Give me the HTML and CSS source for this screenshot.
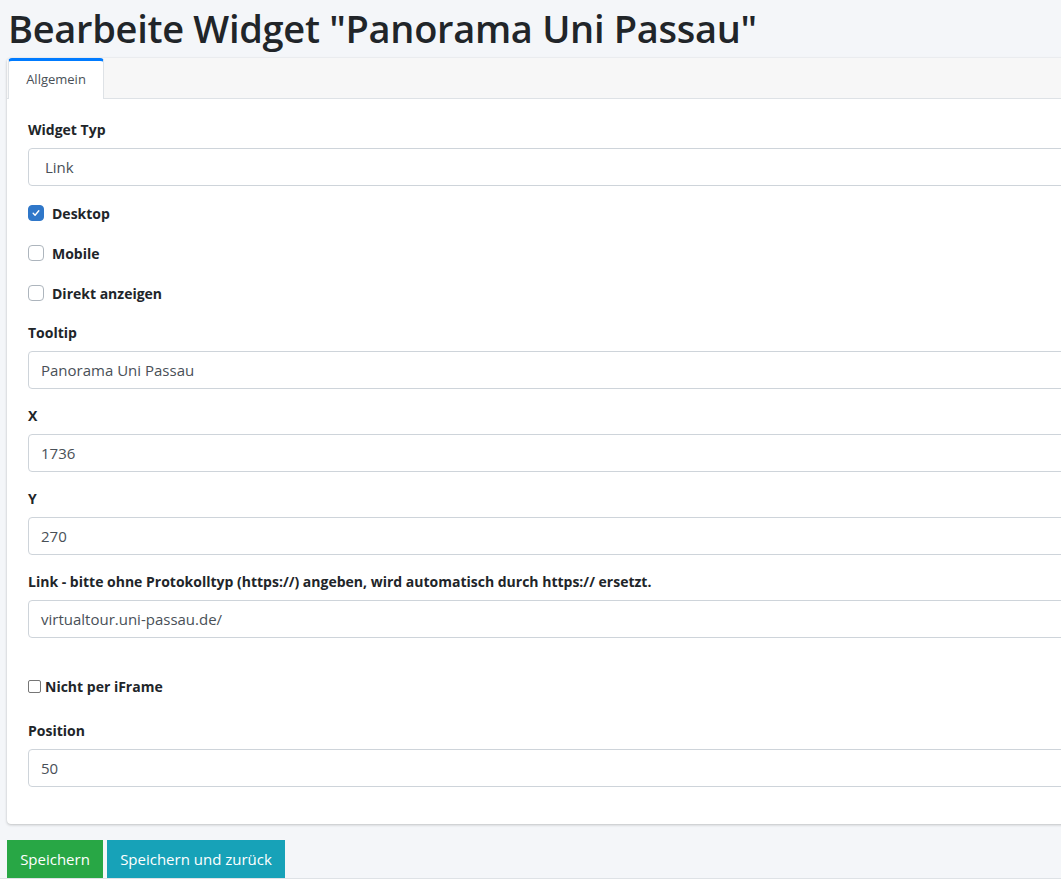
FILE: index.html
```html
<!DOCTYPE html>
<html lang="de">
<head>
<meta charset="utf-8">
<title>Bearbeite Widget</title>
<link rel="stylesheet" href="styles.css">
</head>
<body>
<div class="page">
  <h1 class="title">Bearbeite Widget "Panorama Uni Passau"</h1>
  <div class="card">
    <div class="card-header">
      <div class="tab active">Allgemein</div>
    </div>
    <div class="card-body">
      <div class="group">
        <label class="label">Widget Typ</label>
        <div class="control select">Link</div>
      </div>
      <div class="check"><span class="box checked"><svg viewBox="0 0 16 16" width="10" height="10"><path d="M3.5 8.5l3 3 6-7" fill="none" stroke="#fff" stroke-width="2.2" stroke-linecap="round" stroke-linejoin="round"/></svg></span><span class="check-label">Desktop</span></div>
      <div class="check"><span class="box"></span><span class="check-label">Mobile</span></div>
      <div class="check"><span class="box"></span><span class="check-label">Direkt anzeigen</span></div>
      <div class="group">
        <label class="label">Tooltip</label>
        <div class="control">Panorama Uni Passau</div>
      </div>
      <div class="group">
        <label class="label">X</label>
        <div class="control">1736</div>
      </div>
      <div class="group">
        <label class="label">Y</label>
        <div class="control">270</div>
      </div>
      <div class="group">
        <label class="label">Link - bitte ohne Protokolltyp (https://) angeben, wird automatisch durch https:// ersetzt.</label>
        <div class="control">virtualtour.uni-passau.de/</div>
      </div>
      <div class="native-check"><span class="nbox"></span><span class="check-label">Nicht per iFrame</span></div>
      <div class="group last">
        <label class="label">Position</label>
        <div class="control">50</div>
      </div>
    </div>
  </div>
  <div class="actions">
    <button class="btn btn-success">Speichern</button>
    <button class="btn btn-info">Speichern und zurück</button>
  </div>
</div>
<footer class="footer"></footer>
</body>
</html>
```
FILE: styles.css
```css
html, body {
  margin: 0;
  padding: 0;
  overflow: hidden;
}
body {
  background: #f4f6f9;
  font-family: "Open Sans", "Noto Sans", sans-serif;
  color: #212529;
  height: 893px;
}
.page {
  padding: 0 0 0 7px;
  width: 1120px;
}
.title {
  margin: 0;
  padding: 5px 0 0 1px;
  height: 52px;
  box-sizing: border-box;
  font-size: 38px;
  line-height: 46px;
  font-weight: 600;
  color: #212529;
  letter-spacing: -0.3px;
  white-space: nowrap;
}
.card {
  background: #fff;
  border-radius: 4px;
  box-shadow: 0 0 1px rgba(0,0,0,.125), 0 1px 3px rgba(0,0,0,.2);
  margin-top: 6px;
  overflow: hidden;
}
.card-header {
  display: flex;
  background: #f7f7f7;
  border-bottom: 1px solid #dee2e6;
  height: 41px;
  box-sizing: border-box;
  padding-left: 1px;
}
.tab {
  font-size: 13px;
  color: #495057;
  display: flex;
  align-items: center;
  height: 41px;
  box-sizing: border-box;
  width: 96px;
  justify-content: center;
}
.tab.active {
  background: #fff;
  border-top: 3px solid #007bff;
  border-left: 1px solid #dee2e6;
  border-right: 1px solid #dee2e6;
  border-radius: 4px 4px 0 0;
  padding-bottom: 3px;
}
.card-body {
  padding: 21px 20px 37px 21px;
}
.group {
  margin-bottom: 17px;
}
.label {
  display: block;
  font-size: 14px;
  font-weight: 700;
  line-height: 20px;
  margin-bottom: 8px;
  color: #212529;
}
.control {
  height: 38px;
  box-sizing: border-box;
  border: 1px solid #ced4da;
  border-radius: 4px;
  padding: 0 12px;
  display: flex;
  align-items: center;
  font-size: 15px;
  color: #495057;
}
.control.select {
  padding-left: 16px;
}
.check {
  display: flex;
  align-items: center;
  height: 20px;
  margin-bottom: 20px;
}
.box {
  width: 16px;
  height: 16px;
  box-sizing: border-box;
  border: 1px solid #adb5bd;
  border-radius: 4px;
  background: #fff;
  margin-right: 8px;
  display: flex;
  align-items: center;
  justify-content: center;
}
.box.checked {
  background: #2f77c9;
  border-color: #2f77c9;
}
.check-label {
  font-size: 14px;
  font-weight: 700;
  color: #212529;
}
.native-check {
  display: flex;
  align-items: center;
  height: 20px;
  margin-top: 38px;
  margin-bottom: 25px;
}
.nbox {
  width: 13px;
  height: 13px;
  box-sizing: border-box;
  border: 1px solid #767676;
  border-radius: 2px;
  margin-right: 4px;
}
.group.last {
  margin-bottom: 0;
}
.actions {
  display: flex;
  gap: 4px;
  margin-top: 16px;
}
.btn {
  border: 0;
  border-radius: 0;
  height: 38px;
  padding: 0 12px;
  font-family: inherit;
  font-size: 15px;
  color: #fff;
}
.btn-success {
  background: #28a745;
  width: 96px;
}
.btn-info {
  background: #17a2b8;
  width: 178px;
}
.footer {
  background: #fff;
  border-top: 1px solid #dee2e6;
  height: 20px;
}
```
